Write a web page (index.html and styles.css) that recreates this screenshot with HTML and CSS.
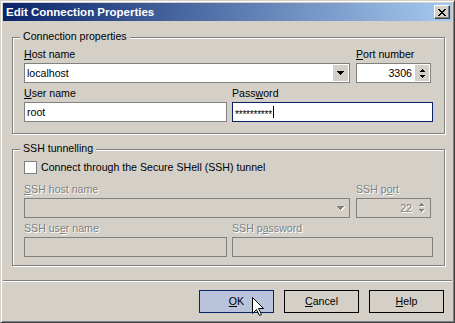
FILE: index.html
```html
<!DOCTYPE html>
<html>
<head>
<meta charset="utf-8">
<link rel="stylesheet" href="styles.css">
</head>
<body>
<div class="window">
  <div class="titlebar">
    <span class="title">Edit Connection Properties</span>
    <span class="close">
      <svg width="8" height="7" viewBox="0 0 8 7" shape-rendering="crispEdges"><g fill="#000"><rect x="0" y="0" width="2" height="1"/><rect x="6" y="0" width="2" height="1"/><rect x="1" y="1" width="2" height="1"/><rect x="5" y="1" width="2" height="1"/><rect x="2" y="2" width="4" height="1"/><rect x="3" y="3" width="2" height="1"/><rect x="2" y="4" width="4" height="1"/><rect x="1" y="5" width="2" height="1"/><rect x="5" y="5" width="2" height="1"/><rect x="0" y="6" width="2" height="1"/><rect x="6" y="6" width="2" height="1"/></g></svg>
    </span>
  </div>

  <div class="group g1">
    <div class="caption">Connection properties</div>
    <div class="row r1">
      <div class="field f-host">
        <div class="lbl"><u>H</u>ost name</div>
        <div class="box combo">
          <span class="val">localhost</span>
          <span class="btn drop"><svg width="7" height="4" viewBox="0 0 7 4" shape-rendering="crispEdges"><path d="M0 0h7v1H0zM1 1h5v1H1zM2 2h3v1H2zM3 3h1v1H3z" fill="#000"/></svg></span>
        </div>
      </div>
      <div class="field f-port">
        <div class="lbl"><u>P</u>ort number</div>
        <div class="box spin">
          <span class="val num">3306</span>
          <span class="btn spinbtns">
            <svg width="5" height="3" viewBox="0 0 5 3" shape-rendering="crispEdges"><path d="M2 0h1v1H2zM1 1h3v1H1zM0 2h5v1H0z" fill="#000"/></svg>
            <svg width="5" height="3" viewBox="0 0 5 3" shape-rendering="crispEdges"><path d="M0 0h5v1H0zM1 1h3v1H1zM2 2h1v1H2z" fill="#000"/></svg>
          </span>
        </div>
      </div>
    </div>
    <div class="row r2">
      <div class="field f-user">
        <div class="lbl"><u>U</u>ser name</div>
        <div class="box"><span class="val">root</span></div>
      </div>
      <div class="field f-pass">
        <div class="lbl">Pass<u>w</u>ord</div>
        <div class="box focused"><span class="val stars">**********</span><span class="caret"></span></div>
      </div>
    </div>
  </div>

  <div class="group g2">
    <div class="caption">SSH tunnelling</div>
    <div class="check-row">
      <span class="checkbox"></span>
      <span>Connect through the Secure SHell (SSH) tunnel</span>
    </div>
    <div class="row r1">
      <div class="field f-host">
        <div class="lbl dis"><u>S</u>SH host name</div>
        <div class="box combo disabled">
          <span class="val"></span>
          <span class="btn drop"><svg width="8" height="5" viewBox="0 0 8 5" shape-rendering="crispEdges"><path d="M1 1h7v1H1zM2 2h5v1H2zM3 3h3v1H3zM4 4h1v1H4z" fill="#fff"/><path d="M0 0h7v1H0zM1 1h5v1H1zM2 2h3v1H2zM3 3h1v1H3z" fill="#808080"/></svg></span>
        </div>
      </div>
      <div class="field f-port">
        <div class="lbl dis">SSH p<u>o</u>rt</div>
        <div class="box spin disabled">
          <span class="val num">22</span>
          <span class="btn spinbtns">
            <svg width="6" height="4" viewBox="0 0 6 4" shape-rendering="crispEdges"><path d="M3 1h1v1H3zM2 2h3v1H2zM1 3h5v1H1z" fill="#fff"/><path d="M2 0h1v1H2zM1 1h3v1H1zM0 2h5v1H0z" fill="#808080"/></svg>
            <svg width="6" height="4" viewBox="0 0 6 4" shape-rendering="crispEdges"><path d="M1 1h5v1H1zM2 2h3v1H2zM3 3h1v1H3z" fill="#fff"/><path d="M0 0h5v1H0zM1 1h3v1H1zM2 2h1v1H2z" fill="#808080"/></svg>
          </span>
        </div>
      </div>
    </div>
    <div class="row r2">
      <div class="field f-user">
        <div class="lbl dis">SSH us<u>e</u>r name</div>
        <div class="box disabled"></div>
      </div>
      <div class="field f-pass">
        <div class="lbl dis">SSH p<u>a</u>ssword</div>
        <div class="box disabled"></div>
      </div>
    </div>
  </div>

  <div class="separator"></div>

  <div class="buttons">
    <span class="button default"><u>O</u>K</span>
    <span class="button"><u>C</u>ancel</span>
    <span class="button"><u>H</u>elp</span>
  </div>

  <svg class="cursor" width="13" height="20" viewBox="0 0 13 20"><path d="M0.5 0.5V16.5L4.5 12.5L7.5 18.5L9.5 17.5L6.5 11.5H11.5Z" fill="#fff" stroke="#000" stroke-width="1" stroke-linejoin="miter"/></svg>
</div>
</body>
</html>
```

FILE: styles.css
```css
html, body {
  margin: 0;
  padding: 0;
  background: #d4d0c8;
}

.window {
  position: relative;
  width: 455px;
  height: 323px;
  box-sizing: border-box;
  background: #d4d0c8;
  border: 1px solid;
  border-color: #d4d0c8 #404040 #404040 #d4d0c8;
  box-shadow: inset 1px 1px #fff, inset -1px -1px #808080;
  padding: 2px;
  display: flex;
  flex-direction: column;
  font-family: "Liberation Sans", Arial, sans-serif;
  font-size: 10.6px;
  line-height: 13px;
  color: #000;
}

.titlebar {
  flex: none;
  height: 18px;
  display: flex;
  align-items: center;
  justify-content: space-between;
  padding: 0 2px 0 3px;
  background: linear-gradient(to right, #0a246a, #a6caf0);
}

.title {
  color: #fff;
  font-weight: bold;
  font-size: 11.5px;
}

.close {
  width: 16px;
  height: 14px;
  box-sizing: border-box;
  background: #d4d0c8;
  border: 1px solid;
  border-color: #fff #404040 #404040 #fff;
  box-shadow: inset -1px -1px #808080;
  display: flex;
  align-items: center;
  justify-content: center;
}

.close svg {
  display: block;
}

.group {
  flex: none;
  border: 1px solid #808080;
  box-shadow: inset 1px 1px #fff, 1px 1px #fff;
  padding: 0 10px 0 11px;
  margin: 0 7px 0 9px;
}

.g1 {
  margin-top: 16px;
  padding-bottom: 11px;
}

.g2 {
  margin-top: 15px;
  padding-bottom: 8px;
}

.caption {
  width: fit-content;
  margin: -8px 0 5px -4px;
  padding: 0 3px;
  background: #d4d0c8;
  line-height: 13px;
}

.g2 .caption {
  margin-bottom: 6px;
}

.row {
  display: flex;
}

.row.r1 {
  gap: 6px;
}

.row.r2 {
  gap: 5px;
  margin-top: 4px;
}

.f-host { width: 326px; }
.f-port { width: 75px; }
.f-user { width: 203px; }
.f-pass { width: 201px; }

.lbl {
  height: 13px;
  margin-bottom: 2px;
  white-space: nowrap;
}

.lbl.dis {
  color: #808080;
  text-shadow: 1px 1px #fff;
}

.box {
  height: 20px;
  box-sizing: border-box;
  border: 1px solid #808080;
  background: #fff;
  display: flex;
  align-items: center;
  padding-left: 2px;
}

.box.disabled {
  background: #d4d0c8;
  color: #808080;
}

.box.focused {
  border-color: #0a246a;
}

.val {
  flex: 1;
  white-space: nowrap;
}

.val.num {
  text-align: right;
  padding-right: 2px;
}

.disabled .val.num {
  text-shadow: 1px 1px #fff;
}

.stars {
  flex: none;
  font-size: 10px;
  letter-spacing: -0.2px;
  position: relative;
  top: 2px;
}

.caret {
  width: 1px;
  height: 12px;
  background: #000;
  margin-left: 1px;
}

.btn {
  align-self: stretch;
  background: #d4d0c8;
  margin: 1px;
  display: flex;
  align-items: center;
  justify-content: center;
}

.btn svg {
  display: block;
}

.drop {
  width: 15px;
}

.spinbtns {
  width: 14px;
  flex-direction: column;
  justify-content: space-around;
  padding: 2px 0 2px;
}

.check-row {
  display: flex;
  align-items: center;
  gap: 4px;
  height: 13px;
  margin-bottom: 9px;
}

.checkbox {
  width: 13px;
  height: 13px;
  box-sizing: border-box;
  border: 1px solid #808080;
  background: #fff;
}

.separator {
  flex: none;
  height: 0;
  border-top: 1px solid #808080;
  border-bottom: 1px solid #fff;
  margin-top: 14px;
}

.buttons {
  flex: none;
  display: flex;
  justify-content: flex-end;
  gap: 10px;
  padding-right: 8px;
  margin-top: 8px;
}

.button {
  width: 75px;
  height: 23px;
  box-sizing: border-box;
  border: 1px solid #000;
  display: flex;
  align-items: center;
  justify-content: center;
}

.button.default {
  background: #b9c4dc;
  border-color: #0a246a;
}

.cursor {
  position: absolute;
  left: 251px;
  top: 296px;
}
```
